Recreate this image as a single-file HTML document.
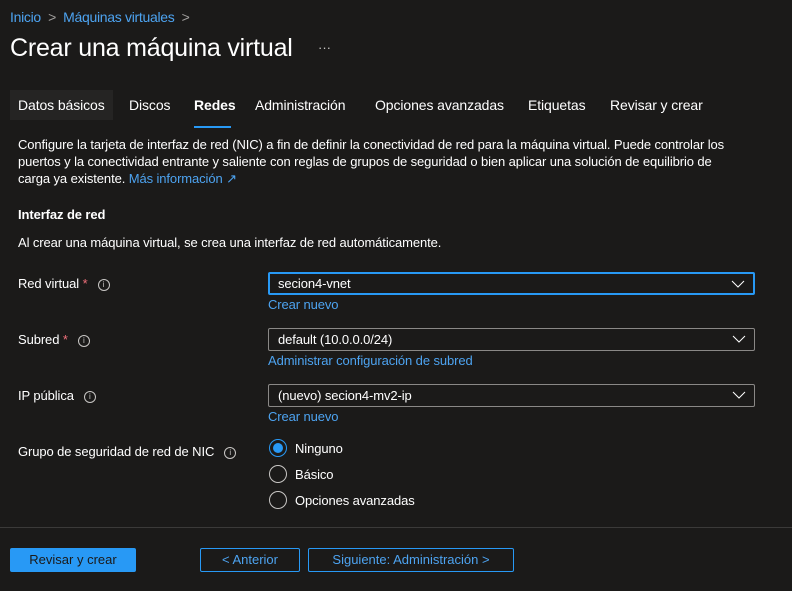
<!DOCTYPE html>
<html><head><meta charset="utf-8"><style>
*{margin:0;padding:0;box-sizing:border-box}
body{width:792px;height:591px;background:#1b1a19;color:#fff;font-family:"Liberation Sans",sans-serif;font-size:13px;position:relative;overflow:hidden}
.a{position:absolute;white-space:nowrap}
.l{color:#4da3f0}
.t{font-size:13px;letter-spacing:-0.1px}
.dd{position:absolute;left:268px;width:487px;height:23px;border:1px solid #8a8886;border-radius:2px;padding:3px 9px;font-size:13px;letter-spacing:-0.1px}
.dd svg{position:absolute;right:8px;top:6px}
.info{display:inline-block;width:12px;height:12px;border:1px solid #c8c6c4;border-radius:50%;font-size:8px;line-height:10px;text-align:center;color:#c8c6c4;vertical-align:middle;margin-left:10px}
.req{color:#f1707b}
.r{position:absolute;left:269px;width:18px;height:18px;border:1px solid #c8c6c4;border-radius:50%}
.btn{position:absolute;top:548px;height:24px;border:1px solid #2899f5;border-radius:2px;color:#4da3f0;text-align:center;line-height:22px;font-size:13px}
</style></head><body>
<div class="a l" style="left:10px;top:9px;font-size:14px;letter-spacing:-0.3px">Inicio <span style="color:#a19f9d">&nbsp;&gt;&nbsp;</span> Máquinas virtuales <span style="color:#a19f9d">&nbsp;&gt;</span></div>
<div class="a" style="left:10px;top:34px;font-size:25px;letter-spacing:-0.2px;font-weight:500">Crear una máquina virtual</div>
<div class="a" style="left:318px;top:40px;color:#c8c6c4">···</div>
<div class="a" style="left:10px;top:90px;width:103px;height:30px;background:#252423"></div>
<div class="a t" style="left:18px;top:97px;font-size:14px">Datos básicos</div>
<div class="a t" style="left:129px;top:97px;font-size:14px">Discos</div>
<div class="a t" style="left:194px;top:97px;font-size:14px;font-weight:bold">Redes</div>
<div class="a" style="left:194px;top:126px;width:37px;height:2px;background:#2899f5"></div>
<div class="a t" style="left:255px;top:97px;font-size:14px">Administración</div>
<div class="a t" style="left:375px;top:97px;font-size:14px">Opciones avanzadas</div>
<div class="a t" style="left:528px;top:97px;font-size:14px">Etiquetas</div>
<div class="a t" style="left:610px;top:97px;font-size:14px">Revisar y crear</div>
<div class="a t" style="left:18px;top:136px;line-height:17px">Configure la tarjeta de interfaz de red (NIC) a fin de definir la conectividad de red para la máquina virtual. Puede controlar los<br>puertos y la conectividad entrante y saliente con reglas de grupos de seguridad o bien aplicar una solución de equilibrio de<br>carga ya existente. <span class="l">Más información ↗</span></div>
<div class="a t" style="left:18px;top:207px;font-weight:bold">Interfaz de red</div>
<div class="a t" style="left:18px;top:235px">Al crear una máquina virtual, se crea una interfaz de red automáticamente.</div>
<div class="a t" style="left:18px;top:276px">Red virtual <span class="req">*</span><span class="info">i</span></div>
<div class="dd" style="top:272px;border:2px solid #2899f5;padding:2px 8px">secion4-vnet<svg width="14" height="8"><path d="M1 1l6 6 6-6" stroke="#fff" fill="none"/></svg></div>
<div class="a t l" style="left:268px;top:297px">Crear nuevo</div>
<div class="a t" style="left:18px;top:332px">Subred <span class="req">*</span><span class="info">i</span></div>
<div class="dd" style="top:328px">default (10.0.0.0/24)<svg width="14" height="8"><path d="M1 1l6 6 6-6" stroke="#fff" fill="none"/></svg></div>
<div class="a t l" style="left:268px;top:353px">Administrar configuración de subred</div>
<div class="a t" style="left:18px;top:388px">IP pública<span class="info">i</span></div>
<div class="dd" style="top:384px">(nuevo) secion4-mv2-ip<svg width="14" height="8"><path d="M1 1l6 6 6-6" stroke="#fff" fill="none"/></svg></div>
<div class="a t l" style="left:268px;top:409px">Crear nuevo</div>
<div class="a t" style="left:18px;top:444px">Grupo de seguridad de red de NIC<span class="info">i</span></div>
<div class="r" style="top:439px;border-color:#2899f5"><div style="position:absolute;left:3px;top:3px;width:10px;height:10px;border-radius:50%;background:#2899f5"></div></div>
<div class="a t" style="left:295px;top:441px">Ninguno</div>
<div class="r" style="top:465px"></div>
<div class="a t" style="left:295px;top:467px">Básico</div>
<div class="r" style="top:491px"></div>
<div class="a t" style="left:295px;top:493px">Opciones avanzadas</div>
<div class="a" style="left:0;top:527px;width:792px;height:1px;background:#3b3a39"></div>
<div class="btn" style="left:10px;width:126px;background:#2899f5;color:#1b1a19">Revisar y crear</div>
<div class="btn" style="left:200px;width:100px">&lt; Anterior</div>
<div class="btn" style="left:308px;width:206px">Siguiente: Administración &gt;</div>
</body></html>
